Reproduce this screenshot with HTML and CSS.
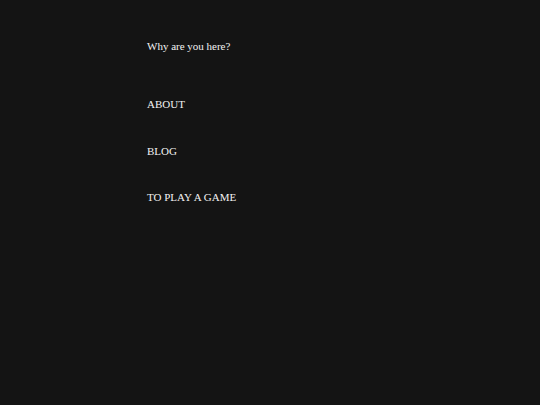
FILE: index.html
```html
<!DOCTYPE html>
<html lang="en">

<head>
    <meta charset="UTF-8">
    <meta name="viewport" content="width=device-width, initial-scale=1.0">
    <title>Why are you here?</title>
    <link rel="stylesheet" href="styles.css">
</head>

<body>
    <div class="wrap">
        <p class="question">Why are you here?</p>

        <ul class="menu">
            <li><a href="#about">ABOUT</a></li>
            <li><a href="#blog">BLOG</a></li>
            <li><a href="#game">TO PLAY A GAME</a></li>
        </ul>
    </div>
</body>

</html>
```

FILE: styles.css
```css
html,
body {
    margin: 0;
    height: 100%;
    background-color: #141414;
}

body {
    font-family: "Liberation Serif", serif;
    font-size: 11px;
    color: #f2f2f2;
}

.wrap {
    padding: 39px 0 0 147px;
}

.question {
    margin: 0;
    line-height: 15px;
}

.menu {
    list-style: none;
    margin: 43px 0 0;
    padding: 0;
    display: flex;
    flex-direction: column;
    gap: 31.5px;
}

.menu li {
    line-height: 15px;
}

.menu a {
    color: #f2f2f2;
    text-decoration: none;
}
```
